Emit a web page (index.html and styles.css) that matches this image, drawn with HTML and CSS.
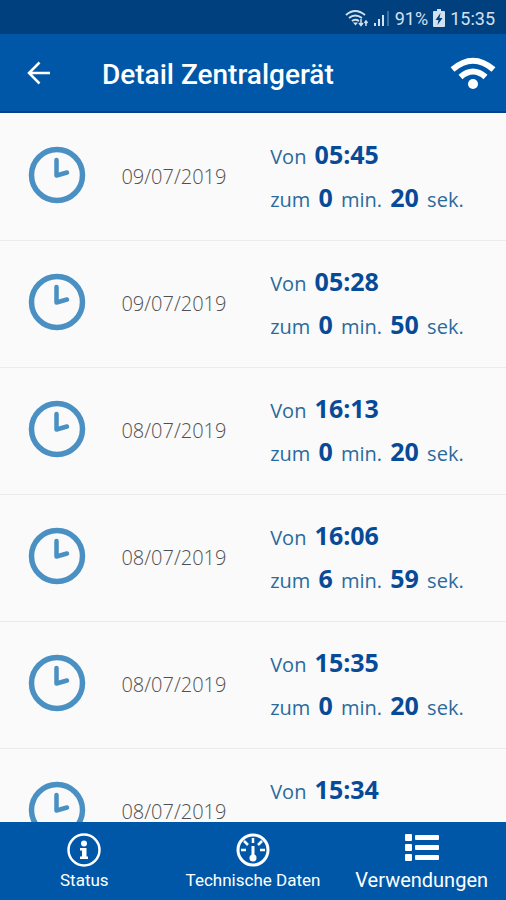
FILE: index.html
```
<!DOCTYPE html>
<html lang="de">
<head>
	<meta charset="UTF-8">
	<meta name="viewport" content="width=device-width, initial-scale=1">
	<title>Detail Zentralgerät</title>
	<link rel="stylesheet" href="styles.css">
</head>
<body>
	<svg class="sprite" aria-hidden="true">
		<symbol id="clock" viewBox="0 0 58 58">
			<circle cx="29" cy="29" r="25.500" fill="none" stroke="currentColor" stroke-width="5.500"/>
			<path d="M28.500 14V29.500L39 26.500" fill="none" stroke="currentColor" stroke-width="4.500" stroke-linecap="round" stroke-linejoin="round"/>
		</symbol>
	</svg>
	<div class="statusbar">
		<svg class="wifi-small" viewBox="0 0 24 20" fill="none" stroke="currentColor" stroke-width="2">
			<path d="M1 7Q10 -1 20 7M4 10Q10 5 17 10M7 13Q10 10.500 14 13"/>
			<path d="M8 14.500H13L10.500 17.500Z" fill="currentColor" stroke="none"/>
			<path d="M16 11V17M14 15L16 17.500L18 15M21 18V13M19.500 15L21 13L22.500 15" stroke-width="1.500"/>
		</svg>
		<svg class="signal" viewBox="0 0 16 18" fill="currentColor">
			<path d="M0 14H2V17H0ZM4 10H6V17H4ZM8 6H10V17H8Z"/>
			<path d="M13 2H15V17H13Z" opacity=".3"/>
		</svg>
		<span>91%</span>
		<svg class="battery" viewBox="0 0 12 18">
			<path d="M4 0H8V2H11Q12 2 12 3V17Q12 18 11 18H1Q0 18 0 17V3Q0 2 1 2H4Z" fill="currentColor"/>
			<path d="M7.500 4L2.500 11H5.500L4.500 16L9.500 9H6.500Z" fill="#01407f"/>
		</svg>
		<span>15:35</span>
	</div>
	<header class="header">
		<button class="back" type="button" aria-label="Zurück">
			<svg viewBox="0 0 24 24" fill="none" stroke="currentColor" stroke-width="2.500">
				<path d="M23 12H2M12.500 1.500L2 12L12.500 22.500"/>
			</svg>
		</button>
		<h1>Detail Zentralgerät</h1>
		<svg class="wifi" viewBox="0 0 46 34" fill="none" stroke="currentColor" stroke-width="6">
			<path d="M2.500 13.500Q23 -4 43.500 13.500M10.500 21Q23 10 35.500 21"/>
			<circle cx="23" cy="28" r="5" fill="currentColor" stroke="none"/>
		</svg>
	</header>
	<main class="list">
		<div class="item">
			<svg class="clock"><use href="#clock"/></svg>
			<span class="date">09/07/2019</span>
			<div class="info">
				<p>Von <b>05:45</b></p>
				<p>zum <b>0</b> min. <b>20</b> sek.</p>
			</div>
		</div>
		<div class="item">
			<svg class="clock"><use href="#clock"/></svg>
			<span class="date">09/07/2019</span>
			<div class="info">
				<p>Von <b>05:28</b></p>
				<p>zum <b>0</b> min. <b>50</b> sek.</p>
			</div>
		</div>
		<div class="item">
			<svg class="clock"><use href="#clock"/></svg>
			<span class="date">08/07/2019</span>
			<div class="info">
				<p>Von <b>16:13</b></p>
				<p>zum <b>0</b> min. <b>20</b> sek.</p>
			</div>
		</div>
		<div class="item">
			<svg class="clock"><use href="#clock"/></svg>
			<span class="date">08/07/2019</span>
			<div class="info">
				<p>Von <b>16:06</b></p>
				<p>zum <b>6</b> min. <b>59</b> sek.</p>
			</div>
		</div>
		<div class="item">
			<svg class="clock"><use href="#clock"/></svg>
			<span class="date">08/07/2019</span>
			<div class="info">
				<p>Von <b>15:35</b></p>
				<p>zum <b>0</b> min. <b>20</b> sek.</p>
			</div>
		</div>
		<div class="item">
			<svg class="clock"><use href="#clock"/></svg>
			<span class="date">08/07/2019</span>
			<div class="info">
				<p>Von <b>15:34</b></p>
			</div>
		</div>
	</main>
	<nav class="tabs">
		<a href="#status">
			<svg viewBox="0 0 34 34">
				<circle cx="17" cy="17" r="15.500" fill="none" stroke="currentColor" stroke-width="2.500"/>
				<circle cx="17" cy="10.500" r="3" fill="currentColor"/>
				<path d="M13 15H19.500V23.500H21V26H13V23.500H15V17.500H13Z" fill="currentColor"/>
			</svg>
			<span>Status</span>
		</a>
		<a href="#daten">
			<svg viewBox="0 0 34 34" fill="none" stroke="currentColor" stroke-width="2.500">
				<circle cx="17" cy="17" r="15" stroke-width="3"/>
				<path d="M17 5V10M5 17H10M24 17H29M8 8L12 12M26 8L22 12"/>
				<path d="M17 13V25" stroke-width="3"/>
				<circle cx="17" cy="25" r="3.500" fill="currentColor" stroke="none"/>
			</svg>
			<span>Technische Daten</span>
		</a>
		<a class="active" href="#verwendungen">
			<svg viewBox="0 0 34 34" fill="currentColor">
				<rect x="0" y="1" width="7" height="7" rx="1"/>
				<rect x="0" y="11" width="7" height="7" rx="1"/>
				<rect x="0" y="21" width="7" height="7" rx="1"/>
				<rect x="10" y="2" width="24" height="5" rx="1"/>
				<rect x="10" y="12" width="24" height="5" rx="1"/>
				<rect x="10" y="22" width="24" height="5" rx="1"/>
			</svg>
			<span>Verwendungen</span>
		</a>
	</nav>
</body>
</html>
```
FILE: styles.css
```
*{box-sizing: border-box;}
body,h1,p{
	margin: 0;
	padding: 0;
}
body{
	display: flex;
	flex-direction: column;
	height: 100vh;
	background: #fafafa;
	font-family: Roboto, "Liberation Sans", sans-serif;
}
svg{
	display: block;
	flex: none;
}
.sprite{
	position: absolute;
	width: 0;
	height: 0;
}
.statusbar{
	display: flex;
	flex: none;
	align-items: center;
	justify-content: flex-end;
	gap: 5px;
	height: 34px;
	padding: 2px 11px 0 0;
	background: #01407f;
	color: #d3e0ee;
	font-size: 18px;
}
.wifi-small{
	width: 24px;
	height: 20px;
}
.signal{
	width: 16px;
	height: 18px;
}
.battery{
	width: 12px;
	height: 18px;
}
.header{
	display: flex;
	flex: none;
	align-items: center;
	height: 79px;
	padding: 0 10px 0 15px;
	border-bottom: 2px solid #00408f;
	background: #0057a8;
	color: #fff;
}
.back{
	display: flex;
	align-items: center;
	justify-content: center;
	width: 48px;
	height: 48px;
	padding: 0;
	border: 0;
	background: none;
	color: inherit;
}
.back svg{
	width: 24px;
	height: 24px;
}
h1{
	flex: 1;
	padding: 4px 0 0 39px;
	font-size: 28px;
	line-height: 32px;
	font-weight: 500;
}
.wifi{
	width: 46px;
	height: 34px;
}
.list{
	flex: 1;
	min-height: 0;
	padding-top: 1px;
	overflow: hidden;
	font-family: "Open Sans", "Noto Sans", sans-serif;
}
.item{
	display: grid;
	grid-template-columns: 24% 1fr 47%;
	align-items: start;
	height: 127px;
	padding-top: 20px;
	border-bottom: 1px solid #ebebeb;
}
.clock{
	width: 58px;
	height: 58px;
	margin: 12px 0 0 28px;
	color: #4a90c2;
}
.date{
	padding-top: 29px;
	font-size: 20px;
	line-height: 28px;
	font-weight: 300;
	color: #505050;
}
.info{
	padding: 1px 0 0 2px;
	font-size: 20px;
	color: #2a6a9c;
}
.info p{
	line-height: 43px;
	white-space: nowrap;
}
.info b{
	margin: 0 3px;
	font-size: 25px;
	line-height: 25px;
	color: #064a98;
}
.tabs{
	display: grid;
	grid-template-columns: repeat(3, 1fr);
	flex: none;
	height: 78px;
	background: #0057a8;
}
.tabs a{
	display: flex;
	flex-direction: column;
	align-items: center;
	padding-top: 11px;
	color: #fff;
	font-size: 17px;
	line-height: 27px;
	text-decoration: none;
	white-space: nowrap;
}
.tabs svg{
	width: 34px;
	height: 34px;
}
.tabs .active{
	font-size: 20px;
}
```
